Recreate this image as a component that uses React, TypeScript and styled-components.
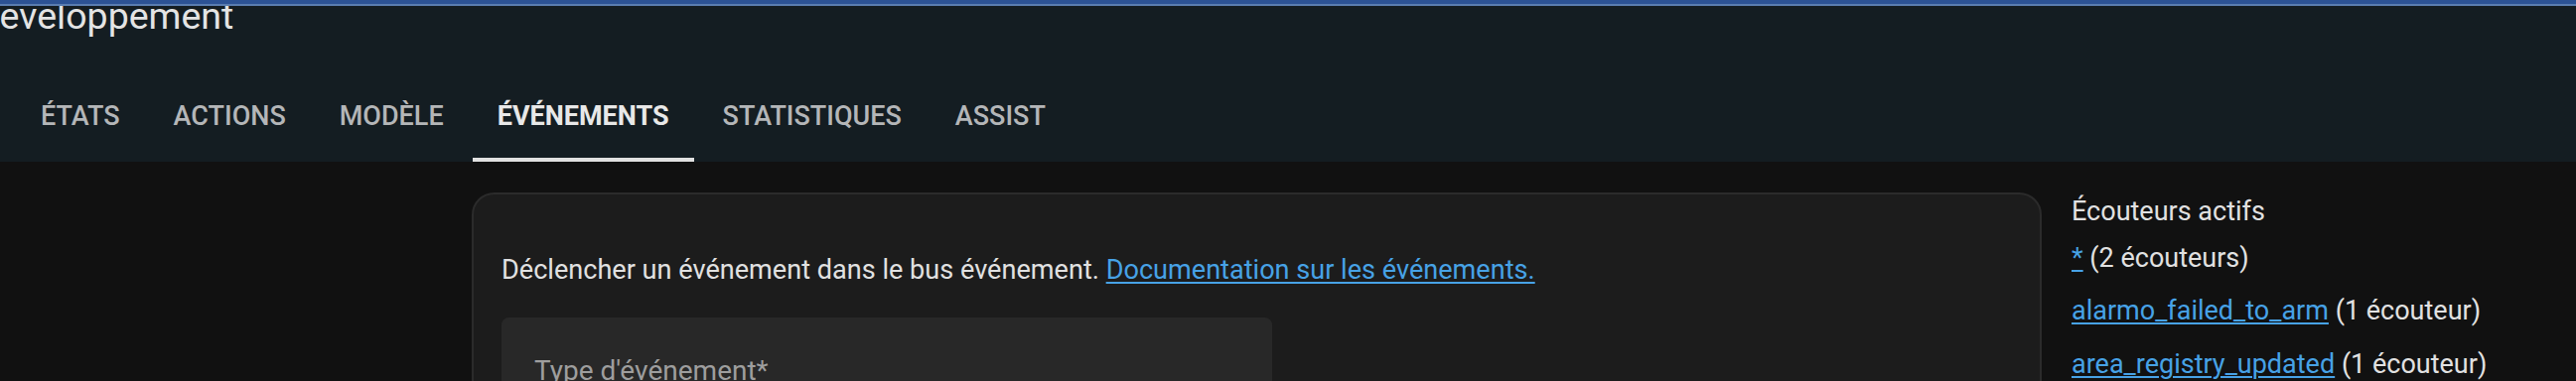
import { createGlobalStyle, styled } from 'styled-components';

const GlobalStyle = createGlobalStyle`
  html, body {
    margin: 0;
    padding: 0;
    background: #111111;
    overflow: hidden;
  }
  body {
    font-family: Roboto, "Noto Sans", "Liberation Sans", sans-serif;
    color: #e1e1e1;
  }
`;

const Page = styled.div`
  width: 2594px;
  height: 384px;
  overflow: hidden;
  background: #111111;
`;

const Header = styled.header`
  background: #141d22;
  display: flex;
  flex-direction: column;
`;

const TopStrip = styled.div`
  height: 4px;
  background: #2c5294;
  border-bottom: 2px solid #5a7db0;
`;

const TitleRow = styled.div`
  height: 68px;
  overflow: hidden;
`;

const Title = styled.div`
  margin-left: -25px;
  font-size: 37.5px;
  line-height: 20px;
  font-weight: 400;
  color: #e4e4e4;
  white-space: nowrap;
`;

const Tabs = styled.nav`
  height: 89px;
  display: flex;
  gap: 4px;
  padding-left: 16px;
`;

const Tab = styled.div<{ $active?: boolean }>`
  position: relative;
  padding: 28px 25px 0;
  font-size: 27px;
  line-height: 30px;
  font-weight: ${(p) => (p.$active ? 700 : 500)};
  color: ${(p) => (p.$active ? '#e8e8e8' : '#b4b6b8')};
  text-transform: uppercase;
  white-space: nowrap;

  &::after {
    content: '';
    display: ${(p) => (p.$active ? 'block' : 'none')};
    position: absolute;
    left: 0;
    right: 0;
    bottom: 0;
    height: 4px;
    background: #e1e1e1;
  }
`;

const Content = styled.main`
  display: flex;
  align-items: flex-start;
  gap: 30px;
  padding: 31px 0 0 475px;
`;

const Card = styled.section`
  flex: 0 0 1581px;
  box-sizing: border-box;
  height: 400px;
  background: #1c1c1c;
  border: 2px solid #2b2b2b;
  border-radius: 22.5px;
  padding: 58px 28px 0;
`;

const Intro = styled.p`
  margin: 0 0 28px;
  font-size: 27.1px;
  line-height: 37.5px;
  color: #e1e1e1;
`;

const Link = styled.a`
  color: #47a2e6;
  text-decoration: underline;
  text-decoration-thickness: 2px;
  text-underline-offset: 3px;
  cursor: pointer;
`;

const Field = styled.div`
  width: 776px;
  height: 105px;
  box-sizing: border-box;
  background: #282828;
  border-radius: 7.5px 7.5px 0 0;
  padding: 35px 0 0 33px;
`;

const FieldLabel = styled.label`
  display: block;
  font-size: 28px;
  line-height: 37.5px;
  color: #9e9e9e;
`;

const Listeners = styled.aside`
  flex: 1;
  padding-top: 1px;
  font-size: 27px;
  line-height: 37.5px;
`;

const ListenersTitle = styled.div`
  color: #e1e1e1;
  margin-bottom: 9px;
`;

const ListenerList = styled.ul`
  list-style: none;
  margin: 0;
  padding: 0;
`;

const ListenerItem = styled.li`
  margin-bottom: 16px;
  color: #e1e1e1;
  white-space: nowrap;
`;

const listeners = [
  { event: '*', label: '(2 écouteurs)' },
  { event: 'alarmo_failed_to_arm', label: '(1 écouteur)' },
  { event: 'area_registry_updated', label: '(1 écouteur)' },
  { event: 'automation_reloaded', label: '(1 écouteur)' },
];

const tabs = ['États', 'Actions', 'Modèle', 'Événements', 'Statistiques', 'Assist'];

const App = () => {
  return (
    <Page>
      <GlobalStyle />
      <Header>
        <TopStrip />
        <TitleRow>
          <Title>Développement</Title>
        </TitleRow>
        <Tabs>
          {tabs.map((t) => (
            <Tab key={t} $active={t === 'Événements'}>
              {t}
            </Tab>
          ))}
        </Tabs>
      </Header>

      <Content>
        <Card>
          <Intro>
            Déclencher un événement dans le bus événement.{' '}
            <Link>Documentation sur les événements.</Link>
          </Intro>
          <Field>
            <FieldLabel>Type d'événement*</FieldLabel>
          </Field>
        </Card>
        <Listeners>
          <ListenersTitle>Écouteurs actifs</ListenersTitle>
          <ListenerList>
            {listeners.map((l) => (
              <ListenerItem key={l.event}>
                <Link>{l.event}</Link> {l.label}
              </ListenerItem>
            ))}
          </ListenerList>
        </Listeners>
      </Content>
    </Page>
  );
};

export default App;
